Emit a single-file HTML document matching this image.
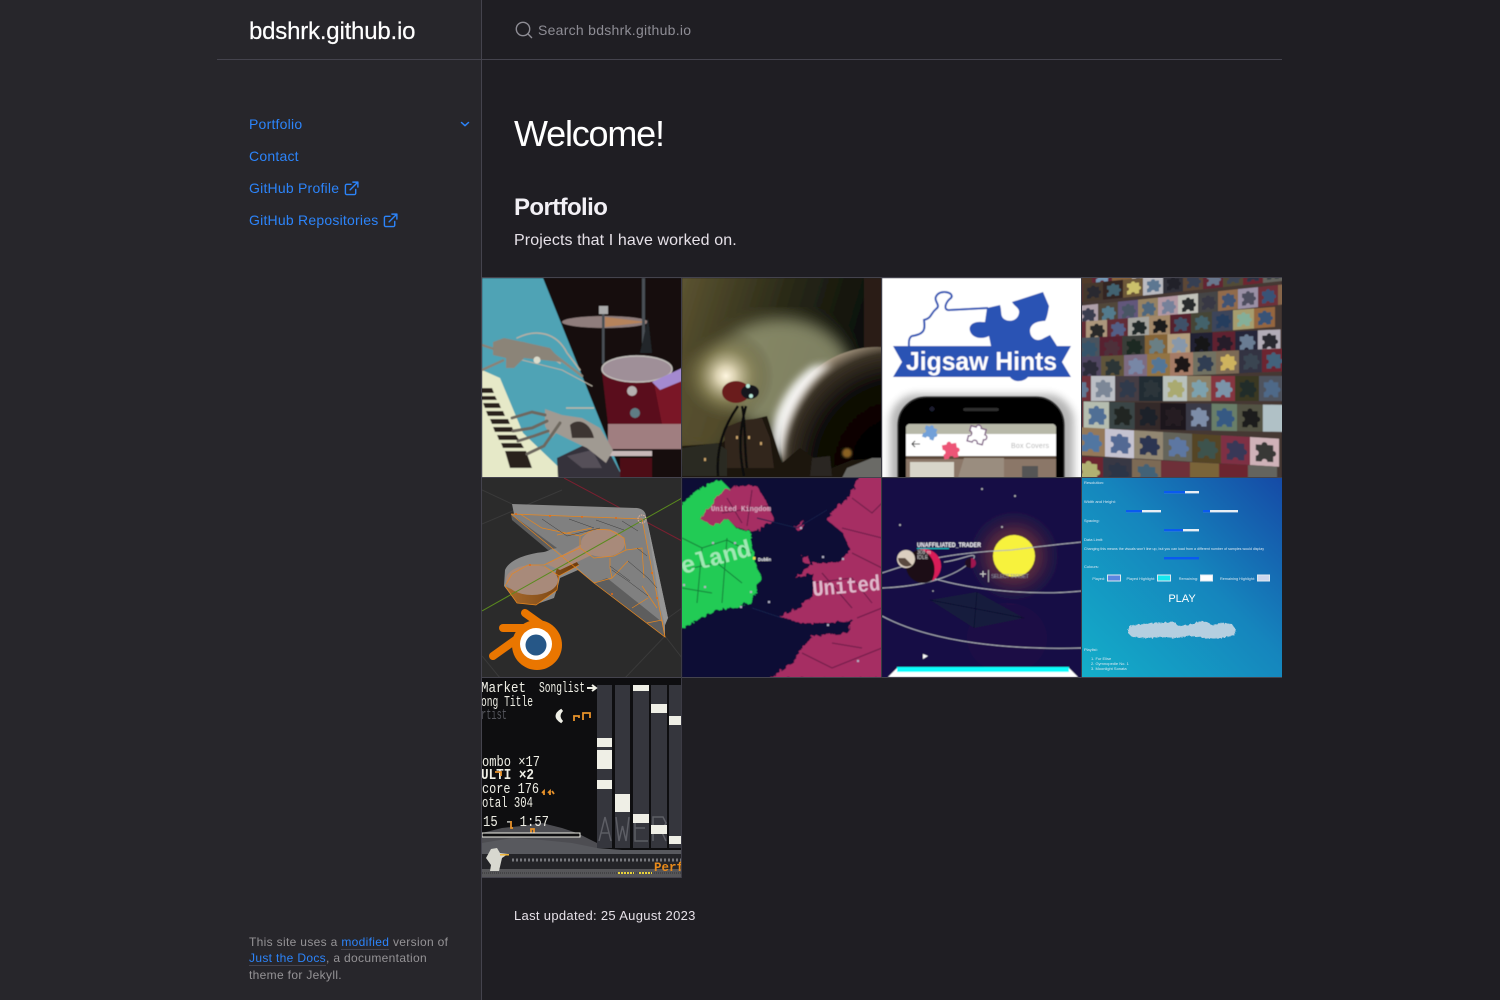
<!DOCTYPE html>
<html lang="en">
<head>
<meta charset="utf-8">
<title>bdshrk.github.io</title>
<style>
html,body{margin:0;padding:0;width:1500px;height:1000px;overflow:hidden;background:#1f1e23}
body{font-family:"Liberation Sans",sans-serif;position:relative}
.side{position:absolute;left:0;top:0;width:481px;height:1000px;background:#27262b}
.vl{position:absolute;left:481px;top:0;width:1px;height:1000px;background:#44434d}
.hl{position:absolute;left:217px;top:59px;width:1065px;height:1px;background:#44434d}
.t{position:absolute;white-space:nowrap}
a{color:#2c84fa;text-decoration:none}
.nav{left:249px;font-size:14px;line-height:20px;color:#2c84fa;letter-spacing:.22px}
.foot{left:249px;font-size:12px;line-height:16px;color:#959396;letter-spacing:.33px}
.foot a{border-bottom:1px solid #44434d}
#tiles{position:absolute;left:482px;top:278px}
.c rect{width:20px;height:20px}
</style>
</head>
<body>
<div class="side"></div>
<div class="vl"></div>
<div class="hl"></div>

<div class="t" style="left:249px;top:16px;font-size:24px;line-height:32px;color:#fff;letter-spacing:-.2px;-webkit-text-stroke:.2px #fff">bdshrk.github.io</div>
<svg class="t" style="left:514px;top:20px" width="20" height="20" viewBox="0 0 20 20" fill="none" stroke="#8e8d95" stroke-width="1.4"><circle cx="9" cy="9" r="6.7"/><path d="M13.8 13.8 17.6 17.6" stroke-linecap="round"/></svg>
<div class="t" style="left:538px;top:20px;font-size:14px;line-height:20px;color:#8e8d95;letter-spacing:.27px">Search bdshrk.github.io</div>

<div class="t nav" style="top:114px">Portfolio</div>
<svg class="t" style="left:459px;top:120px" width="12" height="8" viewBox="0 0 12 8" fill="none" stroke="#2c84fa" stroke-width="1.5" stroke-linecap="round" stroke-linejoin="round"><path d="M2.500 2.500 6 5.700 9.500 2.500"/></svg>
<div class="t nav" style="top:146px">Contact</div>
<div class="t nav" style="top:178px">GitHub Profile</div>
<svg class="t" style="left:344px;top:181px" width="15" height="15" viewBox="0 0 16 16" fill="none" stroke="#2c84fa" stroke-width="1.500" stroke-linecap="round" stroke-linejoin="round"><path d="M7.500 3.500H3a1.500 1.500 0 0 0-1.500 1.500v8A1.500 1.500 0 0 0 3 14.500h8a1.500 1.500 0 0 0 1.500-1.500V9"/><path d="M6.500 9.500 14.500 1.500M9.500 1.200h5.300v5.300"/></svg>
<div class="t nav" style="top:210px">GitHub Repositories</div>
<svg class="t" style="left:383px;top:213px" width="15" height="15" viewBox="0 0 16 16" fill="none" stroke="#2c84fa" stroke-width="1.500" stroke-linecap="round" stroke-linejoin="round"><path d="M7.500 3.500H3a1.500 1.500 0 0 0-1.500 1.500v8A1.500 1.500 0 0 0 3 14.500h8a1.500 1.500 0 0 0 1.500-1.500V9"/><path d="M6.500 9.500 14.500 1.500M9.500 1.200h5.300v5.300"/></svg>

<div class="t foot" style="top:934px">This site uses a <a>modified</a> version of</div>
<div class="t foot" style="top:950px"><a>Just the Docs</a>, a documentation</div>
<div class="t foot" style="top:967px">theme for Jekyll.</div>

<div class="t" style="left:514px;top:112px;font-size:36px;line-height:44px;color:#fff;letter-spacing:-1.2px">Welcome!</div>
<div class="t" style="left:514px;top:193px;font-size:24px;line-height:30px;color:#f2f0f5;font-weight:700;letter-spacing:-.6px">Portfolio</div>
<div class="t" style="left:514px;top:231px;font-size:16px;line-height:20px;color:#e6e1e8;letter-spacing:.1px">Projects that I have worked on.</div>
<div class="t" style="left:514px;top:908px;font-size:13px;line-height:16px;color:#e6e1e8;letter-spacing:.32px">Last updated: 25 August 2023</div>

<svg id="tiles" width="800" height="600" viewBox="0 0 800 600">
<defs>
<path id="p" d="M-6-5h4a2 2 0 1 1 4 0h4v4a2 2 0 1 1 0 4v4h-4a2 2 0 1 0-4 0h-4v-4a2 2 0 1 0 0-4z"/>
<linearGradient id="g8" x1="1" y1="0" x2="0" y2="1"><stop offset="0" stop-color="#154aa6"/><stop offset=".45" stop-color="#1585bd"/><stop offset="1" stop-color="#14aec9"/></linearGradient>
<radialGradient id="sg"><stop offset="0" stop-color="#7a4a30"/><stop offset=".5" stop-color="#4a2440"/><stop offset="1" stop-color="#150f45" stop-opacity="0"/></radialGradient>
<radialGradient id="g2a"><stop offset="0" stop-color="#fff6e0"/><stop offset=".2" stop-color="#d8cfae"/><stop offset=".55" stop-color="#8a8458" stop-opacity=".7"/><stop offset="1" stop-color="#4a4528" stop-opacity="0"/></radialGradient>
<linearGradient id="g2b" x1="0" y1="0" x2="1" y2=".3"><stop offset="0" stop-color="#5c5431"/><stop offset=".5" stop-color="#2a2a18"/><stop offset="1" stop-color="#050806"/></linearGradient>
<radialGradient id="pl" cx=".62" cy=".62" r=".72"><stop offset="0" stop-color="#020202"/><stop offset=".6" stop-color="#0a0806"/><stop offset=".82" stop-color="#3a3226"/><stop offset=".94" stop-color="#b8a890"/><stop offset="1" stop-color="#fff8ea"/></radialGradient>
<linearGradient id="wl" x1="0" y1="0" x2="1" y2="0"><stop offset="0" stop-color="#a86a2c"/><stop offset="1" stop-color="#6f3c0c"/></linearGradient>
<filter id="b1"><feGaussianBlur stdDeviation="1"/></filter>
<filter id="b4"><feGaussianBlur stdDeviation="4"/></filter>
<filter id="b8"><feGaussianBlur stdDeviation="8"/></filter>
<filter id="s"><feGaussianBlur stdDeviation=".45"/></filter>
<filter id="j" x="-5%" y="-5%" width="110%" height="110%"><feTurbulence type="fractalNoise" baseFrequency=".22" numOctaves="2" seed="4"/><feDisplacementMap in="SourceGraphic" scale="5"/></filter>
<filter id="j2" x="-5%" y="-20%" width="110%" height="140%"><feTurbulence type="fractalNoise" baseFrequency=".5 .3" numOctaves="2" seed="2"/><feDisplacementMap in="SourceGraphic" scale="3"/></filter>
</defs>

<!-- tile 1 -->
<svg x="0" y="0" width="200" height="200" viewBox="0 0 200 200">
<g filter="url(#s)">
<rect width="200" height="200" fill="#140f0e"/>
<path d="M0 0H61L141 200H0Z" fill="#4fa3b5"/>
<path d="M0 92 18 100 41 155 88 200H0Z" fill="#e6e9c8"/>
<g fill="#2b211f"><path d="M0 110H10L12 115H0Z"/><path d="M0 118H13L15 122H0Z"/><path d="M1 125H17L19 130H3Z"/><path d="M4 133H21L23 138H6Z"/><path d="M8 141H26L28 146H10Z"/><path d="M11 149H30L32 154H13Z"/><path d="M15 157H34L37 162H17Z"/><path d="M19 165H39L42 170H21Z"/><path d="M23 173H44L50 190H28Z"/></g>
<path d="M76 200 75 180 100 168 125 170 141 200Z" fill="#34303a"/>
<path d="M85 178 110 172 120 190 100 190Z" fill="#555059"/>
<ellipse cx="123" cy="44" rx="43" ry="6" fill="#8f7d7b"/><path d="M123 39 165 44 123 49Z" fill="#b5835c"/>
<rect x="117" y="28" width="9" height="8" fill="#aaa"/><rect x="120" y="36" width="2.500" height="50" fill="#4a5055"/>
<rect x="160" y="0" width="3" height="70" fill="#4a5055"/><path d="M166 40 158 75 170 75Z" fill="#23282b"/>
<path d="M120 94H190V146H126Z" fill="#5a0f1c"/>
<ellipse cx="155" cy="91" rx="35" ry="13" fill="#9f8f98" stroke="#c0bcb8" stroke-width="1.500"/>
<path d="M172 105 200 92V146H180Z" fill="#7a1426"/><path d="M170 104 200 90V103L178 112Z" fill="#a48ad0"/>
<rect x="126" y="146" width="74" height="25" fill="#a07e80"/><rect x="127" y="173" width="66" height="5" fill="#c7b8b8"/>
<rect x="138" y="180" width="36" height="20" fill="#4e0e18"/><rect x="170" y="172" width="30" height="28" fill="#141110"/>
<circle cx="153" cy="135" r="5" fill="#5f7c84"/><circle cx="150" cy="113" r="5" fill="#b5b0b0"/>
<g fill="none" stroke="#b7b0a2" stroke-linecap="round"><path d="M35 60C55 50 75 55 85 75L98 92" stroke-width="1.500"/><path d="M41 65 70 75 100 98" stroke-width="2.500" stroke="#8f887c"/><path d="M40 82 80 92 110 108" stroke-width="1"/><path d="M48 78 60 72 78 85" stroke-width="2"/></g>
<path d="M11 64 22 60 41 64 68 70 80 84 60 82 42 80 32 90 24 90 24 80 11 77Z" fill="#8b8478"/>
<path d="M0 67 12 71M0 92 22 82" stroke="#8a8276" stroke-width="2.500"/>
<circle cx="55" cy="82" r="3.500" fill="#dcdccb"/>
<path d="M84 130 112 130" stroke="#bdb8a8" stroke-width="1.500" fill="none"/>
<path d="M63 131 80 137 100 140 118 150 131 172 124 185 105 170 88 162 74 155 70 160 63 148Z" fill="#a09a92"/>
<path d="M88 147C95 140 108 143 112 160L90 160Z" fill="#3c3532"/>
<path d="M30 140 50 134 63 137M31 153 50 150 65 143M36 163 52 158 66 153M45 176 62 168 78 145" fill="none" stroke="#6d675e" stroke-width="3" stroke-linecap="round"/>
</g></svg>

<!-- tile 2 -->
<svg x="200" y="0" width="200" height="200" viewBox="0 0 200 200">
<g filter="url(#s)">
<rect width="200" height="200" fill="url(#g2b)"/>
<rect x="182" y="0" width="18" height="70" fill="#2c1d12"/>
<ellipse cx="100" cy="95" rx="70" ry="55" fill="#9a9c78" opacity=".8" filter="url(#b8)"/>
<ellipse cx="15" cy="130" rx="40" ry="50" fill="#5d5430" opacity=".7" filter="url(#b8)"/>
<circle cx="44" cy="98" r="48" fill="url(#g2a)"/>
<circle cx="195" cy="165" r="96" fill="url(#pl)"/>
<path d="M131 88C105 105 92 135 90 155 89 168 96 178 101 184 100 160 112 115 150 86Z" fill="#fff" opacity=".9" filter="url(#b4)"/>
<path d="M0 168 14 167 40 165 45 160 42 150 55 145 85 138 92 160 100 185 118 170 132 180 150 190 170 182 200 180V200H0Z" fill="#1a1610"/>
<path d="M42 150 62 142 80 140 88 160 92 190 44 190Z" fill="#33261c"/>
<path d="M0 170 35 165 45 172V198H0Z" fill="#2a2a22"/>
<path d="M130 180 148 178 150 198H128Z" fill="#2b2622"/>
<path d="M165 190 190 180 200 180V200H160Z" fill="#6a6a66"/>
<path d="M36 198C34 170 42 148 56 128M62 198C56 170 58 150 64 128M65 190C62 170 64 145 60 128" stroke="#0d0d0b" stroke-width="2.500" fill="none"/>
<ellipse cx="54" cy="114" rx="14" ry="11" fill="#6b1f1e"/>
<ellipse cx="68" cy="114" rx="9" ry="7" fill="#15191a"/>
<circle cx="66" cy="108" r="2" fill="#b9ebdb"/><circle cx="69" cy="118" r="2" fill="#b9ebdb"/>
<circle cx="165" cy="175" r="5" fill="#8a6222" filter="url(#b1)"/>
<g fill="#c9a36a"><rect x="54" y="158" width="2" height="3"/><rect x="66" y="158" width="2" height="3"/><rect x="22" y="180" width="2" height="3"/><rect x="78" y="164" width="2" height="3"/></g>
</g></svg>

<!-- tile 3 -->
<svg x="400" y="0" width="200" height="200" viewBox="0 0 200 200">
<g filter="url(#s)">
<rect width="200" height="200" fill="#fff"/>
<path d="M105 30 118 27C120 33 118 38 122 41 128 45 136 42 137 35 138 30 132 28 130 24L161 14 167 28C166 34 165 40 163 43 155 43 148 46 148 53 148 60 155 65 162 60L168 57 175 68H109L107 58C100 62 90 60 88 53 86 47 92 43 100 44L103 44Z" fill="#2c52b4"/>
<path d="M106 30 68 32C60 33 64 23 69 20 73 15 60 11 55 17 50 23 60 27 54 31 48 36 50 40 42 42 43 50 44 56 30 58 26 60 27 66 27 70" fill="none" stroke="#2c52b4" stroke-width="2"/>
<path d="M11 68H189L180 84 189 99H146C142 104 132 105 128 99H11L20 84Z" fill="#2c52b4"/>
<text x="24" y="92" font-family="Liberation Sans,sans-serif" font-weight="700" font-size="26" fill="#fff" textLength="151" lengthAdjust="spacingAndGlyphs">Jigsaw Hints</text>
<rect x="8" y="116" width="184" height="120" rx="28" fill="#777" filter="url(#b4)" opacity=".55"/>
<rect x="16" y="119" width="166" height="120" rx="28" fill="#000" stroke="#333" stroke-width="1.500"/>
<rect x="81" y="130" width="36" height="3" rx="1.500" fill="#2d2d2d"/><circle cx="50" cy="131" r="2.500" fill="#1c1f2e"/>
<path d="M24 150a4 4 0 0 1 4-4H170a4 4 0 0 1 4 4V200H24Z" fill="#fff"/>
<path d="M24 150a4 4 0 0 1 4-4H170a4 4 0 0 1 4 4V156H24Z" fill="#b7b8a8"/>
<rect x="24" y="178" width="150" height="22" fill="#8b7768"/><rect x="24" y="178" width="150" height="3" fill="#5c4a3b"/>
<rect x="28" y="184" width="44" height="16" fill="#d8d5c9"/><path d="M76 200 82 180H122V200Z" fill="#9a8d7f"/><rect x="140" y="188" width="16" height="12" fill="#555"/>
<g transform="translate(48 154) rotate(20)"><use href="#p" fill="#72a0d8"/></g>
<g transform="translate(68 172) rotate(-10) scale(1.200)"><use href="#p" fill="#ed5577"/></g>
<g transform="translate(95 156) rotate(15) scale(1.300)"><use href="#p" fill="#fff" stroke="#7a5a80"/></g>
<text x="129" y="170" font-family="Liberation Sans,sans-serif" font-size="7" fill="#b5b5b5" textLength="38">Box Covers</text>
<path d="M38 166H30M33 163 30 166 33 169" stroke="#333" stroke-width="1" fill="none"/>
</g></svg>

<!-- tile 4 -->
<svg x="600" y="0" width="200" height="200" viewBox="0 0 200 200">
<g filter="url(#s)" style="opacity:.92">
<rect width="200" height="200" fill="#4a3a35"/>
<g class="c" style="filter:saturate(.72)">
<g transform="translate(-10 -8) skewY(-6) scale(1 .9)"><rect fill="#5c3a25"/><rect x="20" fill="#7a2233"/><rect x="40" fill="#a06a30"/><rect x="60" fill="#c9c5c0"/><rect x="80" fill="#3d4450"/><rect x="100" fill="#52301e"/><rect x="120" fill="#7b2a3c"/><rect x="140" fill="#6a7a60"/><rect x="160" fill="#5a4a30"/><rect x="180" fill="#8a3a48"/><rect x="200" fill="#505048"/><use href="#p" x="30" y="10" fill="#6ea4d0"/><use href="#p" x="70" y="10" fill="#4c6ba0"/><use href="#p" x="110" y="10" fill="#6a8aa0"/><use href="#p" x="150" y="10" fill="#3d3a60"/><use href="#p" x="190" y="10" fill="#1f2635"/></g>
<g transform="translate(-19 8) skewY(-6) scale(1 .9)"><rect fill="#6a3030"/><rect x="20" fill="#4d3a2a"/><rect x="40" fill="#3a2420"/><rect x="60" fill="#7b5a2c"/><rect x="80" fill="#c8c8d0"/><rect x="100" fill="#33333d"/><rect x="120" fill="#6a4a30"/><rect x="140" fill="#7a2233"/><rect x="160" fill="#5a5030"/><rect x="180" fill="#8a2030"/><rect x="200" fill="#6a6a60"/><rect x="220" fill="#4a3a35"/><use href="#p" x="30" y="10" fill="#2a2a32"/><use href="#p" x="50" y="10" fill="#3a6a80"/><use href="#p" x="70" y="10" fill="#e0d050"/><use href="#p" x="90" y="10" fill="#5a80a8"/><use href="#p" x="110" y="10" fill="#1f2130"/><use href="#p" x="130" y="10" fill="#35425e"/><use href="#p" x="150" y="10" fill="#6a80a0"/><use href="#p" x="170" y="10" fill="#3d4a60"/><use href="#p" x="190" y="10" fill="#2a3a50"/><use href="#p" x="210" y="10" fill="#3a4a50"/></g>
<g transform="translate(-4 28) skewY(-6)"><rect fill="#c0a8b8"/><rect x="20" fill="#5a4a38"/><rect x="40" fill="#6b5a90"/><rect x="60" fill="#a88a58"/><rect x="80" fill="#c8a0b0"/><rect x="100" fill="#d0d0c4"/><rect x="120" fill="#4a4a4a"/><rect x="140" fill="#a87040"/><rect x="160" fill="#a898b8"/><rect x="180" fill="#8a2a38"/><rect x="200" fill="#9a6a40"/><use href="#p" x="10" y="10" fill="#3c4158"/><use href="#p" x="30" y="10" fill="#4a86a0"/><use href="#p" x="50" y="10" fill="#4a5a72"/><use href="#p" x="70" y="10" fill="#4a7090"/><use href="#p" x="90" y="10" fill="#7a8ab0"/><use href="#p" x="110" y="10" fill="#28302e"/><use href="#p" x="130" y="10" fill="#3b3a4a"/><use href="#p" x="150" y="10" fill="#3a5a88"/><use href="#p" x="170" y="10" fill="#52526b"/><use href="#p" x="190" y="10" fill="#2f5a90"/></g>
<g transform="translate(-17 45) skewY(-4.400) scale(1.050 1)"><rect fill="#7a2a38"/><rect x="20" fill="#c0a078"/><rect x="40" fill="#7a2838"/><rect x="60" fill="#b0b0a8"/><rect x="80" fill="#b89060"/><rect x="100" fill="#6a1e2e"/><rect x="120" fill="#4a4a30"/><rect x="140" fill="#3e4a68"/><rect x="160" fill="#b8a860"/><rect x="180" fill="#b06a30"/><use href="#p" x="30" y="10" fill="#2d2a28"/><use href="#p" x="50" y="10" fill="#54659f"/><use href="#p" x="70" y="10" fill="#202a2e"/><use href="#p" x="90" y="10" fill="#1d1d1a"/><use href="#p" x="110" y="10" fill="#3c5878"/><use href="#p" x="130" y="10" fill="#3d6a78"/><use href="#p" x="150" y="10" fill="#1f4070"/><use href="#p" x="170" y="10" fill="#80c0a0"/><use href="#p" x="190" y="10" fill="#2f5a90"/></g>
<g transform="translate(-5 60) skewY(-2.400) scale(1.130 1.100)"><rect fill="#4a5a68"/><rect x="20" fill="#6e1e30"/><rect x="40" fill="#3a4238"/><rect x="60" fill="#9a6a22"/><rect x="80" fill="#c8a878"/><rect x="100" fill="#24243a"/><rect x="120" fill="#7a1e30"/><rect x="140" fill="#282840"/><rect x="160" fill="#c0b8c8"/><use href="#p" x="10" y="10" fill="#2e5a7a"/><use href="#p" x="30" y="10" fill="#5a3040"/><use href="#p" x="50" y="10" fill="#1a2a22"/><use href="#p" x="70" y="10" fill="#6a8a90"/><use href="#p" x="90" y="10" fill="#8aa4c0"/><use href="#p" x="110" y="10" fill="#141418"/><use href="#p" x="130" y="10" fill="#2a1e30"/><use href="#p" x="150" y="10" fill="#6a86a8"/><use href="#p" x="170" y="10" fill="#2a2a34"/></g>
<g transform="translate(-4 79) skewY(-2.400) scale(1.150 1.150)"><rect fill="#5a4a70"/><rect x="20" fill="#6a5a30"/><rect x="40" fill="#8a7090"/><rect x="60" fill="#a87a30"/><rect x="80" fill="#c08060"/><rect x="100" fill="#7a7a60"/><rect x="120" fill="#8a7050"/><rect x="140" fill="#35354a"/><rect x="160" fill="#8a2030"/><use href="#p" x="10" y="10" fill="#2d2d40"/><use href="#p" x="30" y="10" fill="#2c3a3a"/><use href="#p" x="50" y="10" fill="#7a90c0"/><use href="#p" x="70" y="10" fill="#4c80b0"/><use href="#p" x="90" y="10" fill="#1c1410"/><use href="#p" x="110" y="10" fill="#2d4060"/><use href="#p" x="130" y="10" fill="#e8c040"/><use href="#p" x="150" y="10" fill="#3a4a5a"/><use href="#p" x="170" y="10" fill="#3a6a90"/></g>
<g transform="translate(-15 98) scale(1.200 1.250)"><rect fill="#8a2a38"/><rect x="20" fill="#c8ccd4"/><rect x="40" fill="#4a3e48"/><rect x="60" fill="#1e2e38"/><rect x="80" fill="#c4d0c8"/><rect x="100" fill="#9a8a60"/><rect x="120" fill="#a83040"/><rect x="140" fill="#3f3a18"/><rect x="160" fill="#505868"/><use href="#p" x="10" y="10" fill="#6080a8"/><use href="#p" x="30" y="10" fill="#8090a8"/><use href="#p" x="50" y="10" fill="#2e3e58"/><use href="#p" x="70" y="10" fill="#2a3a40"/><use href="#p" x="90" y="10" fill="#b8b860"/><use href="#p" x="110" y="10" fill="#7ab0c0"/><use href="#p" x="130" y="10" fill="#7aa0c0"/><use href="#p" x="150" y="10" fill="#20302a"/><use href="#p" x="170" y="10" fill="#4a70a0"/></g>
<g transform="translate(-24 123) skewY(1) scale(1.280 1.350)"><rect fill="#7a2a38"/><rect x="20" fill="#c0ccb8"/><rect x="40" fill="#3a4a48"/><rect x="60" fill="#3a2a28"/><rect x="80" fill="#1e1820"/><rect x="100" fill="#3e3c50"/><rect x="120" fill="#6a8a6a"/><rect x="140" fill="#5a5a40"/><rect x="160" fill="#b8d0d8"/><use href="#p" x="30" y="10" fill="#4a78b0"/><use href="#p" x="50" y="10" fill="#1e2824"/><use href="#p" x="70" y="10" fill="#1a2030"/><use href="#p" x="90" y="10" fill="#2a1e22"/><use href="#p" x="110" y="10" fill="#8098c0"/><use href="#p" x="130" y="10" fill="#2a60a0"/><use href="#p" x="150" y="10" fill="#1a1e1a"/></g>
<g transform="translate(-6 149) skewY(3.300) scale(1.450 1.400)"><rect fill="#a88050"/><rect x="20" fill="#d4d0e4"/><rect x="40" fill="#a09070"/><rect x="60" fill="#6a6a5a"/><rect x="80" fill="#604818"/><rect x="100" fill="#a02a48"/><rect x="120" fill="#e8bcc4"/><use href="#p" x="10" y="10" fill="#4a80c0"/><use href="#p" x="30" y="10" fill="#5070b0"/><use href="#p" x="50" y="10" fill="#2a3860"/><use href="#p" x="70" y="10" fill="#5a80c0"/><use href="#p" x="90" y="10" fill="#3a5a50"/><use href="#p" x="110" y="10" fill="#3a3a68"/><use href="#p" x="130" y="10" fill="#3a3a38"/></g>
<g transform="translate(-8 178) skewY(3) scale(1.450 1.400)"><rect fill="#8a2030"/><rect x="20" fill="#3a3a4a"/><rect x="40" fill="#8a7050"/><rect x="60" fill="#8a2a38"/><rect x="80" fill="#8a6a28"/><rect x="100" fill="#8a2030"/><rect x="120" fill="#6a6a60"/><use href="#p" x="10" y="10" fill="#c0c060"/><use href="#p" x="30" y="10" fill="#2a3a50"/><use href="#p" x="50" y="10" fill="#3a6a8a"/></g>
</g>
</g></svg>

<!-- tile 5 -->
<svg x="0" y="200" width="200" height="200" viewBox="0 0 200 200">
<rect width="200" height="200" fill="#2b2b2b"/>
<g stroke="#3a3a3a" fill="none"><path d="M0 46 80 12M0 12 30 26M183 158 200 180M183 158 143 200M0 178 18 200M186 140 200 130"/></g>
<path d="M82 0 200 63" stroke="#7a2030" fill="none"/>
<path d="M30 26 155 30Q163 31 164 38L186 140 183 147 183 158 112 105 96 92 78 100 76 108 72 120 55 126 35 125 22 108 23 92C28 80 50 75 62 74 70 72 72 68 68 65L32 36Z" fill="#8a8a8a"/>
<path d="M29 36 160 41 183 159 112 105 96 90 70 68Z" fill="#808080"/>
<path d="M29 36 75 70 66 72 30 42Z" fill="#5d5d5d"/>
<path d="M112 105 183 159 180 144 125 100Z" fill="#5e5e5e"/>
<path d="M165 42 186 140 183 147 178 128Z" fill="#969696"/>
<path d="M23 108 35 125 54 127 75 112 77 98 97 87 92 80 75 90 72 100C65 112 40 118 23 108Z" fill="url(#wl)"/>
<ellipse cx="121" cy="65" rx="22" ry="14" fill="#a88a7a"/>
<path d="M64 86 100 66 112 76 78 92Z" fill="#a88a7a"/>
<ellipse cx="50" cy="102" rx="26" ry="15" fill="#a88a7a"/>
<path d="M0 133 200 20" stroke="#5a8a1e" fill="none"/>
<g fill="none" stroke="#e8871e" stroke-width=".7"><path d="M29 36 160 41 183 159 112 105 29 36"/><path d="M23 108 30 96 46 87 62 87 80 78 98 70 98 58 113 51 128 52 142 60 144 72 132 78 112 80 98 70M77 98 62 88M144 72 160 70 162 100M128 80 128 90 130 100 146 83M130 100 112 105M166 120 150 130M160 108 175 130M38 36 60 50 98 58M75 57 110 50M183 159 180 142 165 145"/><path d="M23 108 35 125 54 127 75 112 77 98 97 87"/></g>
<g fill="none" stroke="#2a2a2a" stroke-width=".5" stroke-opacity=".8"><path d="M60 41 85 58 118 50M87 41 112 50M114 42 142 52M140 43 156 53M130 92 146 103 166 118M146 83 166 100 175 110M155 70 165 78M128 88 148 103"/></g>
<g fill="#e86a10"><circle cx="34" cy="36" r="1"/><circle cx="68" cy="38" r="1"/><circle cx="100" cy="39" r="1"/><circle cx="134" cy="40" r="1"/><circle cx="170" cy="95" r="1"/><circle cx="175" cy="120" r="1"/><circle cx="130" cy="116" r="1"/><circle cx="48" cy="87" r="1"/></g>
<circle cx="160" cy="41" r="4" fill="none" stroke="#e9b5a0" stroke-width=".9" stroke-dasharray="1.500 1"/>
<path d="M43 135 71 155" stroke="#ea7600" stroke-width="8" stroke-linecap="round"/>
<path d="M21 150 52 150" stroke="#ea7600" stroke-width="8" stroke-linecap="round"/>
<path d="M11 178 46 153" stroke="#ea7600" stroke-width="8" stroke-linecap="round"/>
<circle cx="55" cy="167" r="25" fill="#ea7600"/>
<circle cx="54" cy="166" r="16" fill="#fff"/>
<circle cx="54" cy="167" r="10.500" fill="#265787"/>
</svg>

<!-- tile 6 -->
<svg x="200" y="200" width="200" height="200" viewBox="0 0 200 200">
<g filter="url(#s)">
<rect width="200" height="200" fill="#0a1035"/>
<g filter="url(#j)">
<path d="M38 1 48 11 35 23 31 31 18 41 31 48 46 41 55 51 68 53 71 71 75 91 80 98 75 111 68 125 51 130 31 133 11 145 -4 152V31L11 15Z" fill="#23cb55"/>
<path d="M28 28 38 15 55 8 75 8 85 25 92 42 75 53 55 50 46 41 31 48 18 41Z" fill="#a62d63"/>
<path d="M204 -4H178L171 12 168 18 151 32 145 42 161 55 168 72 158 85 131 85 113 100 131 95 131 118 115 131 97 138 118 145 145 145 171 142 165 155 131 158 118 172 111 185 88 200H204Z" fill="#a62d63"/>
<path d="M113 50 122 42 120 50 115 52ZM120 78 126 78 128 86 122 85Z" fill="#a62d63"/>
</g>
<g stroke="#0f5a2e" stroke-opacity=".7" fill="none"><path d="M0 60 20 70 45 62 70 75M10 90 35 85 60 105M45 60 40 125M20 70 15 125M0 110 30 115"/></g>
<g stroke="#5a1a40" stroke-opacity=".8" fill="none"><path d="M45 20 60 45M70 12 65 48M40 35 85 28M170 20 190 35 200 25M160 50 200 60M170 75 200 90M130 105 170 100 190 125M140 95 170 130M150 165 180 170M120 175 150 190 200 170M175 140 200 130"/></g>
<path d="M75 40 115 50 145 32M70 130 100 140" stroke="#152048" fill="none"/>
<text x="29" y="33" font-family="Liberation Mono,monospace" font-weight="700" font-size="7" fill="#d9a8c0" textLength="60" lengthAdjust="spacingAndGlyphs">United Kingdom</text>
<text transform="translate(1 96) rotate(-15)" font-family="Liberation Mono,monospace" font-weight="700" font-size="24" fill="#a0e8b5" textLength="72" lengthAdjust="spacingAndGlyphs">eland</text>
<text transform="translate(131 118) rotate(-5)" font-family="Liberation Mono,monospace" font-weight="700" font-size="22" fill="#e0b8cc" textLength="68" lengthAdjust="spacingAndGlyphs">United</text>
<rect x="71" y="79" width="2.500" height="2.500" fill="#f0e050"/>
<text x="76" y="83" font-family="Liberation Sans,sans-serif" font-weight="700" font-size="4.200" fill="#fff">Dublin</text>
<g fill="#b0b0c8"><rect x="1" y="106" width="2" height="2"/><rect x="22" y="108" width="2" height="2"/><rect x="30" y="64" width="2" height="2"/><rect x="52" y="64" width="2" height="2"/><rect x="58" y="128" width="2" height="2"/><rect x="68" y="113" width="2" height="2"/><rect x="86" y="123" width="2" height="2"/><rect x="160" y="80" width="2" height="2"/><rect x="175" y="182" width="2" height="2"/><rect x="145" y="146" width="2" height="2"/><rect x="118" y="49" width="2" height="2"/><rect x="140" y="78" width="2" height="2"/></g>
</g></svg>

<!-- tile 7 -->
<svg x="400" y="200" width="200" height="200" viewBox="0 0 200 200">
<g filter="url(#s)">
<rect width="200" height="200" fill="#150f45"/>
<circle cx="132" cy="78" r="52" fill="url(#sg)"/>
<circle cx="132" cy="78" r="21" fill="#f7f23d"/>
<ellipse cx="125" cy="160" rx="40" ry="35" fill="#2a1444" opacity=".5"/>
<g fill="none" stroke="#aeb0b8" stroke-width="1">
<path d="M0 95C30 85 60 75 130 72 160 68 190 65 200 64"/>
<path d="M0 110C50 108 80 95 92 80 95 73 80 82 62 84"/>
<path d="M50 100C90 112 150 118 200 113"/>
<path d="M0 138C50 165 130 172 200 170"/>
</g>
<path d="M48 122 95 114 142 140 92 150Z" fill="#161a3c"/>
<path d="M95 114 92 150M48 122 142 140" stroke="#0e1030" fill="none"/>
<circle cx="41" cy="88" r="17" fill="#1a0f16"/>
<path d="M41 71A17 17 0 0 1 50 103C58 90 50 75 41 71Z" fill="#d81a58"/>
<path d="M36 71C46 72 58 85 50 103 62 92 58 70 36 71Z" fill="#d81a58"/>
<circle cx="24" cy="81" r="9" fill="#dccfc0"/><path d="M16 80a9 9 0 0 0 14 7l-7-7Z" fill="#5a4a40"/>
<circle cx="88" cy="85" r="5" fill="#201020"/><path d="M89 80a5 5 0 0 1 0 10Z" fill="#a01850"/>
<text x="35" y="69" font-family="Liberation Sans,sans-serif" font-weight="700" font-size="6" fill="#fff" textLength="64" lengthAdjust="spacingAndGlyphs">UNAFFILIATED_TRADER</text>
<rect x="35" y="70" width="32" height="1" fill="#18c0c8"/>
<text x="35" y="76" font-family="Liberation Sans,sans-serif" font-size="5" fill="#d8d8d8">308 m</text>
<text x="35" y="81" font-family="Liberation Sans,sans-serif" font-size="5" fill="#d8d8d8">IDLE</text>
<path d="M98 96 104 96M101 93V99" stroke="#c8c8c8"/><rect x="106" y="92" width="1" height="12" fill="#aaa"/>
<text x="109" y="100" font-family="Liberation Sans,sans-serif" font-size="5.500" fill="#8f8fa0" textLength="38">SELECT TARGET</text>
<g fill="#bbb"><circle cx="18" cy="47" r="1"/><circle cx="51" cy="113" r=".8"/><circle cx="120" cy="49" r="1"/><circle cx="100" cy="11" r="1"/><circle cx="133" cy="18" r="1"/></g>
<path d="M41 176 46 178 41 181Z" fill="#fff"/>
<path d="M6 199 16 189H186L196 199Z" fill="#fff"/><rect x="15" y="189" width="172" height="5" fill="#08fdfd"/>
</g></svg>

<!-- tile 8 -->
<svg x="600" y="200" width="200" height="200" viewBox="0 0 200 200" font-family="Liberation Sans,sans-serif">
<rect width="200" height="200" fill="url(#g8)"/>
<g fill="#dbe8f2" font-size="4">
<text x="2" y="6">Resolution:</text><text x="2" y="25">Width and Height:</text><text x="2" y="44">Spacing:</text><text x="2" y="63">Data Limit:</text>
<text x="2" y="72" textLength="180" lengthAdjust="spacingAndGlyphs">Changing this means the visuals won't line up, but you can load from a different number of samples would display</text>
<text x="2" y="90">Colours:</text>
<g text-anchor="end" font-size="3.800"><text x="23" y="102">Played:</text><text x="73" y="102">Played Highlight:</text><text x="116" y="102">Remaining:</text><text x="173" y="102">Remaining Highlight:</text></g>
<text x="2" y="173">Playlist:</text>
<text x="9" y="182">1. Fur Elise</text><text x="9" y="187">2. Gymnopedie No. 1</text><text x="9" y="192">3. Moonlight Sonata</text>
</g>
<g fill="#e8eef5"><rect x="82" y="13" width="35" height="2.400"/><rect x="44" y="32" width="35" height="2.400"/><rect x="121" y="32" width="35" height="2.400"/><rect x="82" y="51" width="35" height="2.400"/></g>
<g fill="#0a5af0"><rect x="82" y="13" width="21" height="2.400"/><rect x="44" y="32" width="16" height="2.400"/><rect x="121" y="32" width="7" height="2.400"/><rect x="82" y="51" width="19" height="2.400"/><rect x="82" y="79" width="35" height="2.400"/></g>
<g stroke="#e0e8f0" stroke-width="1"><rect x="25.500" y="97" width="13" height="6" fill="#5b86e0"/><rect x="75.500" y="97" width="13" height="6" fill="#15e8ef"/><rect x="118.500" y="97" width="12" height="6" fill="#fff"/><rect x="175.500" y="97" width="12" height="6" fill="#ccd6ee"/></g>
<text x="100" y="124" text-anchor="middle" fill="#fff" font-size="11">PLAY</text>
<path filter="url(#j2)" d="M46 150 50 147 62 146 72 145 93 144 95 147 100 148 110 146 118 143 125 144 130 147 140 145 150 146 154 152 152 157 140 160 126 161 118 159 108 158 95 160 80 159 65 160 50 159 46 155Z" fill="#b5cfe0"/>
</svg>

<!-- tile 9 -->
<svg x="0" y="400" width="200" height="200" viewBox="0 0 200 200" font-family="Liberation Mono,monospace">
<rect width="200" height="200" fill="#0e0e10"/>
<path d="M0 155 20 150 40 148 60 145 80 150 95 155 115 165 115 172H0Z" fill="#4d4d52"/>
<g fill="#35363d"><rect x="115" y="7" width="15" height="163"/><rect x="133" y="7" width="15" height="163"/><rect x="151" y="7" width="16" height="163"/><rect x="169" y="7" width="16" height="163"/><rect x="187" y="7" width="13" height="163"/></g>
<path d="M117 163 123 139 129 163M119 155H127M134 139 137 163 140.500 148 144 163 147 139M166 139H153V163H166M153 150H163M171 163V139H181L184 145 181 150H171M178 150 184 163" fill="none" stroke="#5d5e65" stroke-width="1.500"/>
<g fill="#efefe6"><rect x="115" y="60" width="15" height="9"/><rect x="115" y="72" width="15" height="19"/><rect x="115" y="102" width="15" height="9"/><rect x="133" y="116" width="15" height="18"/><rect x="151" y="7" width="16" height="6"/><rect x="151" y="136" width="16" height="9"/><rect x="169" y="26" width="16" height="9"/><rect x="169" y="147" width="16" height="9"/><rect x="187" y="38" width="13" height="9"/><rect x="187" y="158" width="13" height="8"/></g>
<g fill="#efefe6" font-size="15">
<text x="-1" y="14" textLength="45" lengthAdjust="spacingAndGlyphs">Market</text>
<text x="57" y="14" textLength="46" lengthAdjust="spacingAndGlyphs">Songlist</text>
<text x="-1" y="28" textLength="52" lengthAdjust="spacingAndGlyphs">ong Title</text>
<text x="-1" y="41" fill="#55565d" textLength="26" lengthAdjust="spacingAndGlyphs">rtist</text>
<text x="0" y="88" textLength="58" lengthAdjust="spacingAndGlyphs">ombo ×17</text>
<text x="-1" y="101" font-weight="700" textLength="53" lengthAdjust="spacingAndGlyphs">ULTI ×2</text>
<text x="0" y="115" textLength="57" lengthAdjust="spacingAndGlyphs">core 176</text>
<text x="0" y="129" textLength="51" lengthAdjust="spacingAndGlyphs">otal 304</text>
<text x="1" y="148" textLength="66" lengthAdjust="spacingAndGlyphs">15 - 1:57</text>
</g>
<path d="M105 10H113M110 7 114 10 110 13" stroke="#efefe6" stroke-width="2" fill="none"/>
<path d="M80 32Q70 38 80 44 74 38 80 32Z" fill="#efefe6" stroke="#efefe6" stroke-width="3"/>
<g fill="none" stroke="#e8922a" stroke-width="1.800"><path d="M92 43V38H97V40M101 42V35H108V40"/><path d="M60 115 62 113 62 117M66 115 68 113 68 117M70 113 72 116"/><path d="M49 151H52V156H49ZM29 143V150H31M32 162V167"/><path d="M13 94H19V98"/></g>
<rect x="0" y="155" width="98" height="4" fill="#0e0e10" stroke="#efefe6"/>
<path d="M0 165 30 160 60 162 90 165 115 170 140 172 200 172V176H0Z" fill="#58595e"/>
<rect x="0" y="176" width="200" height="15" fill="#242428"/>
<path d="M30 182H200" stroke="#77787d" stroke-width="3" stroke-dasharray="2 2"/>
<rect x="0" y="191" width="200" height="9" fill="#565659"/>
<path d="M0 195H200" stroke="#333" stroke-dasharray="1 1"/>
<path d="M4 180 9 171 15 170 18 175 26 176 20 180 17 193 8 193 9 187Z" fill="#d8d8d0"/><rect x="18" y="176" width="9" height="1.500" fill="#f2b83c"/>
<text x="172" y="193" font-size="13" font-weight="700" fill="#e88a1a" textLength="30" lengthAdjust="spacingAndGlyphs">Perf</text>
<path d="M136 195H152M157 195H170" stroke="#e8d23a" stroke-width="2" stroke-dasharray="2 1"/>
</svg>

<!-- tile borders -->
<g fill="#44434d"><rect y="199" width="800" height="1"/><rect y="399" width="800" height="1"/><rect x="0" y="599" width="200" height="1"/></g>
<g fill="#3c3b45"><rect x="199" y="0" width="1" height="400"/><rect x="399" y="0" width="1" height="400"/><rect x="599" y="0" width="1" height="400"/><rect x="199" y="400" width="1" height="200"/></g>
</svg>
<div class="t" style="left:482px;top:277px;width:800px;height:1px;background:#44434d"></div>
</body>
</html>
